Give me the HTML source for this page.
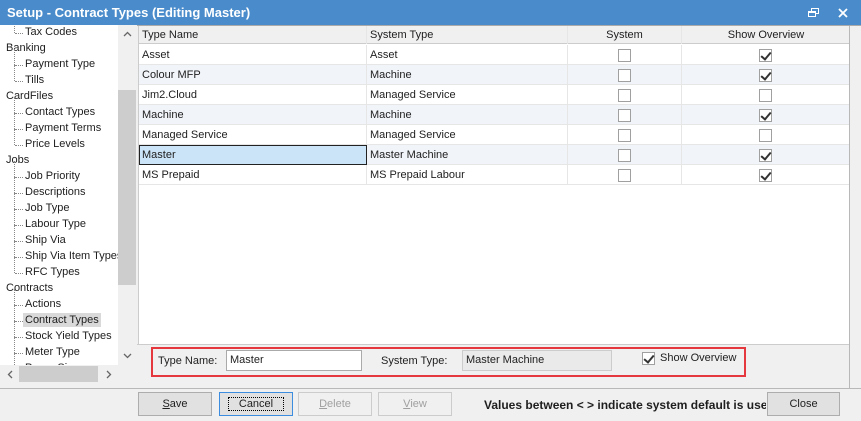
<!DOCTYPE html>
<html><head><style>
*{box-sizing:border-box;margin:0;padding:0}
body{width:861px;height:421px;overflow:hidden;background:#f0f0f0;font-family:"Liberation Sans",sans-serif;font-size:11px;color:#1e1e1e;position:relative}
.abs{position:absolute}
.title{left:0;top:0;width:861px;height:25px;background:#4a8ccb;color:#fff;font-weight:bold;font-size:13px;padding:5px 7px}
.ti{position:absolute;white-space:nowrap;font-size:11px}
.vs{left:118px;top:25px;width:19px;height:340px;background:#f0f0f0}
.hs{left:0;top:365px;width:118px;height:18px;background:#f0f0f0}
.grid{left:138px;top:26px;width:711px;height:318px;background:#fff;border-left:1px solid #ccc}
.row{position:absolute;left:0;width:711px;height:20px;border-bottom:1px solid #e6e6e6}
.c{position:absolute;top:0;height:20px;line-height:20px;padding-left:3px;border-right:1px solid #e6e6e6;white-space:nowrap}
.cb{position:absolute;top:4px;width:13px;height:13px;border:1px solid #a0a0a0;background:#fff}
.cb.k::after{content:"";position:absolute;left:3px;top:0px;width:4px;height:8px;border-right:2px solid #333;border-bottom:2px solid #333;transform:rotate(40deg)}
.btn{position:absolute;top:392px;height:24px;border:1px solid #adadad;background:#e1e1e1;text-align:center;line-height:22px;font-size:11px}
</style></head><body>
<div class="abs title">Setup - Contract Types (Editing Master)
<svg style="position:absolute;left:808px;top:8px" width="12" height="10"><rect x="3.5" y="0.5" width="7" height="5" fill="none" stroke="#fff"/><rect x="0.5" y="3.5" width="7" height="5" fill="#4a8ccb" stroke="#fff"/><line x1="1" y1="4.5" x2="7" y2="4.5" stroke="#fff"/></svg>
<svg style="position:absolute;left:838px;top:8px" width="10" height="10"><path d="M1 1L9 9M9 1L1 9" stroke="#fff" stroke-width="1.8"/></svg></div>
<div class="abs" style="left:0;top:25px;width:861px;height:1px;background:#aaa"></div>
<div id="tree" class="abs" style="left:0;top:25px;width:118px;height:340px;overflow:hidden;background:#fff"></div>
<div class="abs vs"><div class="abs" style="left:0;top:65px;width:18px;height:195px;background:#cdcdcd"></div>
<svg class="abs" style="left:5px;top:6px" width="9" height="6"><path d="M1 5L4.5 1.5L8 5" stroke="#666" fill="none" stroke-width="1.3"/></svg>
<svg class="abs" style="left:5px;top:328px" width="9" height="6"><path d="M1 1L4.5 4.5L8 1" stroke="#666" fill="none" stroke-width="1.3"/></svg></div>
<div class="abs hs"><div class="abs" style="left:19px;top:1px;width:79px;height:16px;background:#cdcdcd"></div>
<svg class="abs" style="left:7px;top:5px" width="6" height="9"><path d="M5 1L1.5 4.5L5 8" stroke="#666" fill="none" stroke-width="1.3"/></svg>
<svg class="abs" style="left:106px;top:5px" width="6" height="9"><path d="M1 1L4.5 4.5L1 8" stroke="#666" fill="none" stroke-width="1.3"/></svg></div>
<div class="abs" style="left:0;top:383px;width:136px;height:4px;background:#f0f0f0"></div>
<div class="abs grid" id="grid">
<div class="row" style="top:0;height:18px;background:#f0f0f0;border-bottom:1px solid #ccc">
<div class="c" style="left:0;width:228px;height:18px;line-height:18px">Type Name</div>
<div class="c" style="left:228px;width:201px;height:18px;line-height:18px">System Type</div>
<div class="c" style="left:429px;width:114px;height:18px;line-height:18px;text-align:center;padding:0">System</div>
<div class="c" style="left:543px;width:168px;height:18px;line-height:18px;text-align:center;padding:0;border:none">Show Overview</div>
</div>
</div>
<div class="abs" style="left:137px;top:344px;width:712px;height:1px;background:#ccc"></div>
<div class="abs" style="left:151px;top:347px;width:595px;height:30px;border:2px solid #e5383e"></div>
<div class="abs" style="left:158px;top:355px">Type Name:</div>
<div class="abs" style="left:226px;top:350px;width:136px;height:21px;border:1px solid #aaa;background:#fff;padding:3px 3px">Master</div>
<div class="abs" style="left:381px;top:355px">System Type:</div>
<div class="abs" style="left:462px;top:350px;width:150px;height:21px;border:1px solid #ccc;background:#eaeaea;padding:3px 3px">Master Machine</div>
<div class="cb k" style="left:642px;top:352px"></div>
<div class="abs" style="left:660px;top:352px">Show Overview</div>
<div class="abs" style="left:0;top:388px;width:861px;height:1px;background:#b8b8b8"></div>
<div class="abs" style="left:849px;top:26px;width:1px;height:362px;background:#b8b8b8"></div>
<div class="btn" style="left:138px;width:74px"><u>S</u>ave</div>
<div class="btn" style="left:219px;width:74px;border:1px solid #3c8ce0"><span style="outline:1px dotted #000;padding:0 10px">Cancel</span></div>
<div class="btn" style="left:298px;width:74px;color:#a0a0a0;background:#f0f0f0;border-color:#ccc"><u>D</u>elete</div>
<div class="btn" style="left:378px;width:74px;color:#a0a0a0;background:#f0f0f0;border-color:#ccc"><u>V</u>iew</div>
<div class="abs" style="left:484px;top:398px;font-weight:bold;font-size:12px;width:282px;overflow:hidden;white-space:nowrap">Values between &lt; &gt; indicate system default is used</div>
<div class="btn" style="left:767px;width:73px">Close</div>
<script>
var items=[["Tax Codes",1],["Banking",0],["Payment Type",1],["Tills",1],["CardFiles",0],["Contact Types",1],["Payment Terms",1],["Price Levels",1],["Jobs",0],["Job Priority",1],["Descriptions",1],["Job Type",1],["Labour Type",1],["Ship Via",1],["Ship Via Item Types",1],["RFC Types",1],["Contracts",0],["Actions",1],["Contract Types",1],["Stock Yield Types",1],["Meter Type",1],["Paper Sizes",1]];
var h="";items.forEach(function(it,i){var y=1+i*16;
if(it[1]){h+='<div class="ti" style="left:15px;top:'+(y+7)+'px;width:8px;border-top:1px dotted #888"></div>';
h+='<div class="ti" style="left:14px;top:'+(y-9)+'px;height:16px;border-left:1px dotted #888"></div>';
h+='<div class="ti" style="left:23px;top:'+(y-1)+'px;padding:1px 2px;'+(it[0]=="Contract Types"?"background:#d9d9d9;":"")+'">'+it[0]+'</div>';}
else h+='<div class="ti" style="left:6px;top:'+y+'px">'+it[0]+'</div>';});
document.getElementById("tree").innerHTML=h;
var rows=[["Asset","Asset",1],["Colour MFP","Machine",1],["Jim2.Cloud","Managed Service",0],["Machine","Machine",1],["Managed Service","Managed Service",0],["Master","Master Machine",1],["MS Prepaid","MS Prepaid Labour",1]];
var g="";rows.forEach(function(r,i){var t=19+i*20;var bg=i%2?"#f1f4f9":"#fff";
g+='<div class="row" style="top:'+t+'px;background:'+bg+'">';
g+='<div class="c" style="left:0;width:228px;'+(i==5?"background:#cce4f7;border:1px solid #222;line-height:18px;padding-left:2px":"")+'">'+r[0]+'</div>';
g+='<div class="c" style="left:228px;width:201px">'+r[1]+'</div>';
g+='<div class="c" style="left:429px;width:114px"><div class="cb" style="left:50px"></div></div>';
g+='<div class="c" style="left:543px;width:168px;border:none"><div class="cb'+(r[2]?" k":"")+'" style="left:77px"></div></div></div>';});
document.getElementById("grid").innerHTML+=g;
</script>
</body></html>
